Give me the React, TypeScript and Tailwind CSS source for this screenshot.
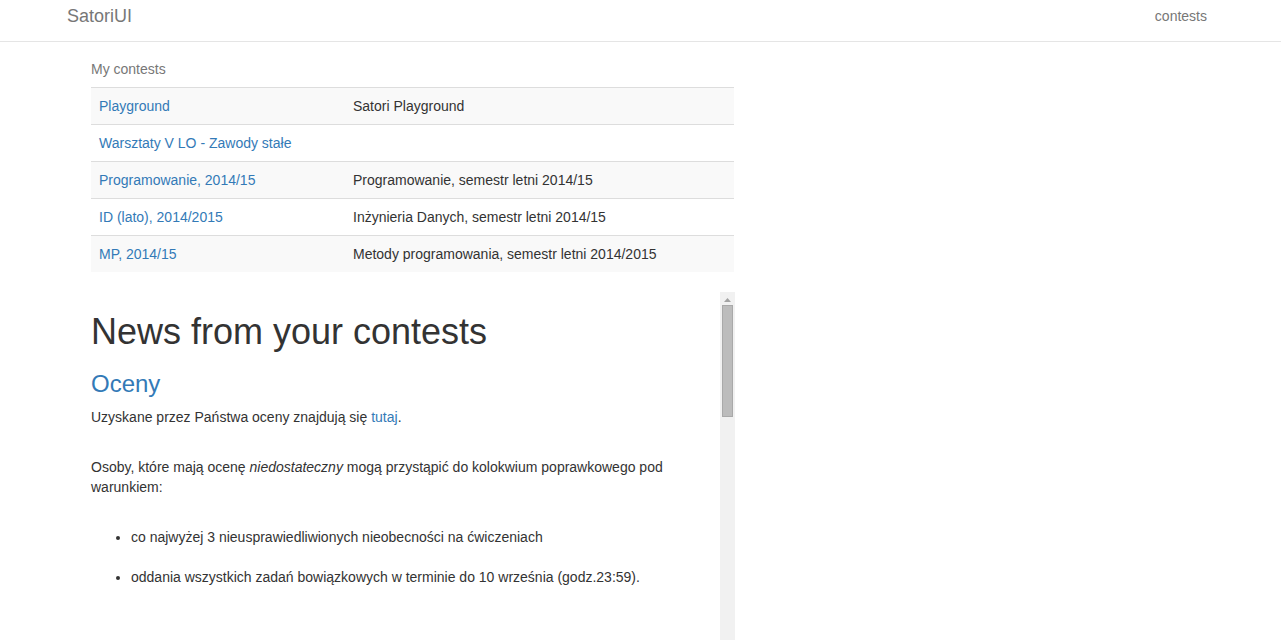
import React from 'react';

const contests = [
  { name: 'Playground', desc: 'Satori Playground' },
  { name: 'Warsztaty V LO - Zawody stałe', desc: '' },
  { name: 'Programowanie, 2014/15', desc: 'Programowanie, semestr letni 2014/15' },
  { name: 'ID (lato), 2014/2015', desc: 'Inżynieria Danych, semestr letni 2014/15' },
  { name: 'MP, 2014/15', desc: 'Metody programowania, semestr letni 2014/2015' },
];

const App = () => {
  return (
    <div className="h-[640px] overflow-hidden bg-white font-['Liberation_Sans',Arial,sans-serif] text-[14px] leading-[20px] text-[#333]">
      {/* Navbar */}
      <nav className="flex h-[42px] items-center justify-between border-b border-[#e5e5e5] pl-[67px] pr-[74px]">
        <span className="-mt-[9px] text-[18px] leading-[20px] text-[#777]">SatoriUI</span>
        <span className="-mt-[9px] text-[#777]">contests</span>
      </nav>

      <div className="ml-[91px] w-[644px]">
        <div className="mt-[17px] mb-[8px] text-[#777]">My contests</div>

        <table className="w-[643px] border-collapse">
          <tbody>
            {contests.map((c, i) => (
              <tr key={i} className={i % 2 === 0 ? 'bg-[#f9f9f9]' : ''}>
                <td className="w-[254px] border-t border-[#ddd] p-[8px] text-[#337ab7]">{c.name}</td>
                <td className="border-t border-[#ddd] p-[8px]">{c.desc}</td>
              </tr>
            ))}
          </tbody>
        </table>

        {/* News panel */}
        <div className="mt-[20px] flex h-[400px]">
          <div className="w-[629px]">
            <h1 className="mt-[20px] text-[36px] leading-[39.6px] text-[#333]">News from your contests</h1>
            <h2 className="mt-[19px] mb-[10px] text-[24px] leading-[26.4px] text-[#337ab7]">Oceny</h2>
            <p className="mb-[10px]">
              Uzyskane przez Państwa oceny znajdują się <span className="text-[#337ab7]">tutaj</span>.
            </p>
            <p className="mt-[30px] mb-[10px]">
              Osoby, które mają ocenę <em>niedostateczny</em> mogą przystąpić do kolokwium poprawkowego pod
              warunkiem:
            </p>
            <ul className="list-disc pl-[40px]">
              <li className="pt-[20px]">co najwyżej 3 nieusprawiedliwionych nieobecności na ćwiczeniach</li>
              <li className="pt-[20px]">oddania wszystkich zadań bowiązkowych w terminie do 10 września (godz.23:59).</li>
            </ul>
          </div>

          {/* scrollbar */}
          <div className="flex w-[15px] flex-col items-center bg-[#f1f1f1]">
            <svg width="7" height="4" viewBox="0 0 7 4" className="mt-[6px]">
              <polygon points="0,4 7,4 3.5,0" fill="#a3a3a3" />
            </svg>
            <div className="mt-[3px] h-[112px] w-[11px] border border-[#a9a9a9] bg-[#bcbcbc]" />
          </div>
        </div>
      </div>
    </div>
  );
};

export default App;
